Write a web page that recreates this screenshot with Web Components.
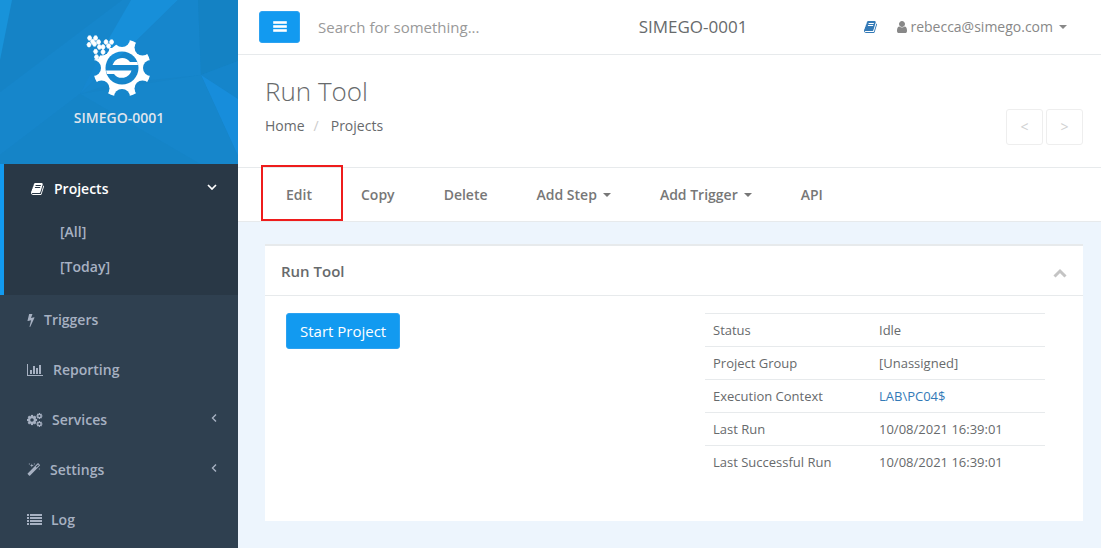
<!DOCTYPE html>
<html lang="en">
<head>
<meta charset="utf-8">
<title>Run Tool</title>
<style>
  html, body { margin: 0; min-height: 100%; }
  body { font: 14px/20px "Open Sans", sans-serif; color: #676a6c; background: #edf5fd; }
</style>
</head>
<body>
<app-shell>
  <side-bar slot="side" account="SIMEGO-0001">
    <nav-item icon="book" label="Projects" arrow="down" active>
      <sub-item>[All]</sub-item>
      <sub-item>[Today]</sub-item>
    </nav-item>
    <nav-item icon="bolt" label="Triggers"></nav-item>
    <nav-item icon="chart" label="Reporting"></nav-item>
    <nav-item icon="cogs" label="Services" arrow="left"></nav-item>
    <nav-item icon="magic" label="Settings" arrow="left"></nav-item>
    <nav-item icon="list" label="Log"></nav-item>
  </side-bar>
  <top-bar account="SIMEGO-0001" user="rebecca@simego.com"></top-bar>
  <page-heading heading="Run Tool"></page-heading>
  <tool-bar>
    <tool-action marked>Edit</tool-action>
    <tool-action>Copy</tool-action>
    <tool-action>Delete</tool-action>
    <tool-action menu>Add Step</tool-action>
    <tool-action menu>Add Trigger</tool-action>
    <tool-action>API</tool-action>
  </tool-bar>
  <tool-panel heading="Run Tool">
    <start-button>Start Project</start-button>
    <status-table></status-table>
  </tool-panel>
</app-shell>

<script>
const define = (name, render) => customElements.define(name, class extends HTMLElement {
  constructor() { super(); this.attachShadow({ mode: 'open' }); }
  connectedCallback() {
    this.shadowRoot.innerHTML = '<style>:host,*{box-sizing:border-box}a{color:inherit;text-decoration:none}button,input{font:inherit;color:inherit;margin:0}</style>' + render(this);
  }
});

const cog = (x, y, r, teeth, w) => {
  const step = 360 / teeth;
  let out = `<circle cx="${x}" cy="${y}" r="${r}" fill="none" stroke="currentColor" stroke-width="${w}"/>`;
  for (let i = 0; i < teeth; i++)
    out += `<rect x="${x - w / 2}" y="${y - r - w}" width="${w}" height="${w}" transform="rotate(${i * step} ${x} ${y})"/>`;
  return out;
};

const icons = {
  book: [14, 14, '0 0 1792 1792', '<path d="M1639 478q40 57 18 129l-275 906q-19 64-76.500 107.500t-122.500 43.500h-923q-77 0-148.500-53.500t-99.500-131.500q-24-67-2-127 0-4 3-27t4-37q1-8-3-21.500t-3-19.500q2-11 8-21t16.500-23.500 16.500-23.500q23-38 45-91.500t30-91.500q3-10 .5-30t-.5-28q3-11 17-28t17-23q21-36 42-92t25-90q1-9-2.500-32t.5-28q4-13 22-30.500t22-22.500q19-26 42.500-84.500t27.500-96.500q1-8-3-25.500t-2-26.500q2-8 9-18t18-23 17-21q8-12 16.500-30.500t15-35 16-36 19.500-32 26.500-23.500 36-11.500 47.500 5.500l-1 3q38-9 51-9h761q74 0 114 56t18 130l-274 906q-36 119-71.500 153.500t-128.500 34.500h-869q-27 0-38 15-11 16-1 43 24 70 144 70h923q29 0 56-15.500t35-41.500l300-987q7-22 5-57 38 15 59 43zm-1064 2q-4 13 2 22.500t20 9.500h608q13 0 25.500-9.500t16.500-22.500l21-64q4-13-2-22.500t-20-9.500h-608q-13 0-25.500 9.500t-16.500 22.500zm-83 256q-4 13 2 22.500t20 9.500h608q13 0 25.500-9.500t16.500-22.500l21-64q4-13-2-22.500t-20-9.500h-608q-13 0-25.500 9.500t-16.500 22.500z"/>'],
  bolt: [8, 14, '410 0 970 1792', '<path d="M1333 566q18 20 7 44l-540 1157q-13 25-42 25-4 0-14-2-17-5-25.500-19t-4.500-30l197-808-406 101q-4 1-12 1-18 0-31-11-18-15-13-39l201-825q4-16 16.500-26t28.500-10h328q19 0 32 12.500t13 29.500q0 8-5 18l-171 463 396-98q8-2 12-2 19 0 33 15z"/>'],
  user: [12, 14, '192 0 1408 1792', '<path d="M1536 1399q0 109-62.500 187t-150.500 78h-854q-88 0-150.500-78t-62.500-187q0-85 8.500-160.500t31.500-152 58.500-131 94-89 134.500-34.500q131 128 313 128t313-128q76 0 134.500 34.500t94 89 58.500 131 31.500 152 8.500 160.500zm-256-887q0 159-112.500 271.500t-271.500 112.500-271.500-112.500-112.500-271.500 112.500-271.500 271.500-112.500 271.500 112.500 112.500 271.500z"/>'],
  magic: [14, 14, '90 0 1664 1792', '<path d="M1254 581l293-293-107-107-293 293zm447-293q0 27-18 45l-1286 1286q-18 18-45 18t-45-18l-198-198q-18-18-18-45t18-45l1286-1286q18-18 45-18t45 18l198 198q18 18 18 45zm-1351-190l98 30-98 30-30 98-30-98-98-30 98-30 30-98zm350 162l196 60-196 60-60 196-60-196-196-60 196-60 60-196zm930 478l98 30-98 30-30 98-30-98-98-30 98-30 30-98zm-640-640l98 30-98 30-30 98-30-98-98-30 98-30 30-98z"/>'],
  chart: [17, 14, '0 0 17 14', '<path d="M0 1h1v11h15v1H0zM3 7h2v4H3zM6 3h2v8H6zM9 5h2v6H9zM12 2h2v9h-2z"/>'],
  cogs: [16, 14, '0 0 16 14', cog(5, 7, 2.9, 8, 2.2) + cog(12.4, 3, 1.7, 8, 1.3) + cog(12.4, 11, 1.7, 8, 1.3)],
  list: [15, 14, '0 0 15 14', '<path d="M0 1h2v2H0zM3 1h12v2H3zM0 4h2v2H0zM3 4h12v2H3zM0 7h2v2H0zM3 7h12v2H3zM0 10h2v2H0zM3 10h12v2H3z"/>'],
  bars: [14, 14, '0 0 14 14', '<path d="M0 1h14v3H0zM0 5h14v3H0zM0 9h14v3H0z" stroke="#129af0" stroke-width=".4"/>'],
  down: [10, 6, '0 0 10 6', '<path d="M1 1l4 4 4-4" fill="none" stroke="currentColor" stroke-width="1.700"/>'],
  left: [6, 10, '0 0 6 10', '<path d="M5 1.500L1.500 5 5 8.500" fill="none" stroke="currentColor" stroke-width="1.400"/>'],
  up: [14, 10, '0 0 14 10', '<path d="M1.500 8.500L7 3l5.500 5.500" fill="none" stroke="currentColor" stroke-width="3"/>'],
  caret: [8, 4, '0 0 8 4', '<path d="M0 0h8L4 4z"/>']
};

define('ui-icon', el => {
  const [w, h, box, body] = icons[el.getAttribute('name')];
  return `<style>:host{display:inline-flex;flex:none}svg{display:block;fill:currentColor}</style>
    <svg width="${w}" height="${h}" viewBox="${box}" aria-hidden="true">${body}</svg>`;
});

define('app-shell', () => `<style>
    :host{display:grid;grid-template-columns:238px minmax(0,1fr);min-height:100vh}
    aside{background:#2f4050}
  </style>
  <aside><slot name="side"></slot></aside><main><slot></slot></main>`);

define('brand-logo', () => {
  let cuts = '';
  for (let i = 0; i < 8; i++) {
    const a = i * Math.PI / 4;
    cuts += `<circle cx="${(29 * Math.cos(a)).toFixed(2)}" cy="${(29 * Math.sin(a)).toFixed(2)}" r="8" fill="#000"/>`;
  }
  const dots = [[-32.4, -30], [-26.4, -30], [-29.4, -26.5], [-33, -23.3], [-27.5, -24], [-23.4, -26], [-22.6, -21], [-26.4, -16.5], [-19, -21], [-19, -16], [-16, -26], [-10.4, -26], [-13.4, -22], [-25.5, -11]]
    .map(([x, y]) => `<path d="M${x - 2.2} ${y}l1.200-2.200h2l1.200 2.200-1.200 2.200h-2z" stroke="#fff" stroke-width=".6"/>`).join('');
  return `<style>:host{display:block}svg{display:block;margin:auto}</style>
  <svg width="66" height="62" viewBox="-36 -33 66 62" role="img" aria-label="Simego">
    <mask id="gear" maskUnits="userSpaceOnUse" x="-36" y="-33" width="66" height="62">
      <circle r="29" fill="#fff"/>${cuts}
      <path d="M-36-33H-5V-24L-10-20H-15V-14H-21L-24-9-36-8z" fill="#000"/>
      <circle r="16.500" fill="#000"/>
    </mask>
    <rect x="-36" y="-33" width="66" height="62" fill="#fff" mask="url(#gear)"/>
    <g fill="#fff">${dots}
      <path d="M-9.500-3A10 10 0 0 1 8-6H15.500L16-3zM-16 2.500H9.500A10 10 0 0 1-8 6H-15z"/>
    </g>
  </svg>`;
});

define('side-bar', el => `<style>
    :host{display:block;color:#a7b1c2;font-weight:600}
    header{position:relative;height:164px;padding-top:35px;background:#1684c8;color:#dfe4ed;text-align:center}
    .facets{position:absolute;inset:0;width:100%;height:100%}
    brand-logo,header a{position:relative}
    header a{display:block;padding-top:11px}
  </style>
  <header>
    <svg class="facets" viewBox="0 0 238 164" preserveAspectRatio="none" aria-hidden="true">
      <path fill="#1686cb" d="M0 92L122 0H131L80 94 0 155z"/>
      <path fill="#1583c6" d="M0 60L12 0H122L0 92z"/>
      <path fill="#1893da" d="M0 0H12L0 60z"/>
      <path fill="#178fd9" d="M131 0H178L134 43 112 64 108 40z"/>
      <path fill="#1687cf" d="M108 40L112 64 80 94z"/>
      <path fill="#1686cc" d="M80 94L134 43 178 0H198L201 75 110 84z"/>
      <path fill="#1482c4" d="M198 0H238V61L201 75z"/>
      <path fill="#1585cb" d="M201 75L238 61V99z"/>
      <path fill="#178ddb" d="M201 75L238 99V156z"/>
      <path fill="#1686cb" d="M80 94L201 75 238 156V164H200z"/>
      <path fill="#1584c7" d="M0 155L80 94 200 164H0z"/>
    </svg>
    <brand-logo></brand-logo>
    <a href="#">${el.getAttribute('account')}</a>
  </header>
  <nav><slot></slot></nav>`);

define('nav-item', el => {
  const arrow = el.getAttribute('arrow');
  return `<style>
    :host{display:block}
    :host([active]){border-left:4px solid #129af0;background:#293846;padding-bottom:11px}
    a{display:flex;align-items:center;height:50px;padding:0 21px 0 27px}
    :host([active]) a{color:#fff}
    .label{flex:1;padding-left:9px}
    .arrow{padding-bottom:4px}
  </style>
  <a href="#"><ui-icon name="${el.getAttribute('icon')}"></ui-icon><span class="label">${el.getAttribute('label')}</span>
  ${arrow ? `<ui-icon class="arrow" name="${arrow}"></ui-icon>` : ''}</a><slot></slot>`;
});

define('sub-item', () => `<style>
    :host{display:block}
    a{display:block;padding:8px 10px 7px 56px}
  </style><a href="#"><slot></slot></a>`);

define('top-bar', el => `<style>
    :host{display:flex;align-items:center;height:55px;padding:0 34px 0 21px;background:#fff;border-bottom:1px solid #e7eaec}
    .toggle{width:41px;height:32px;padding:0;border:1px solid #2ca2f1;border-radius:3px;background:#129af0;color:#fff;display:grid;place-items:center}
    input{flex:1;min-width:0;padding:0 18px;border:0;outline:0;background:none;font-size:15px;line-height:20px}
    input::placeholder{color:#999;opacity:1}
    .account{font-size:17px}
    .docs{margin-left:117px;color:#337ab7;display:flex}
    .user{display:flex;align-items:center;margin-left:18px;padding:0;border:0;background:none;color:#888}
    .user span{padding:0 6px 0 2px}
  </style>
  <button class="toggle" aria-label="Toggle menu"><ui-icon name="bars"></ui-icon></button>
  <input type="text" placeholder="Search for something..." aria-label="Search">
  <span class="account">${el.getAttribute('account')}</span>
  <a class="docs" href="#" aria-label="Documentation"><ui-icon name="book"></ui-icon></a>
  <button class="user"><ui-icon name="user"></ui-icon><span>${el.getAttribute('user')}</span><ui-icon name="caret"></ui-icon></button>`);

define('page-heading', el => `<style>
    :host{display:flex;justify-content:space-between;align-items:flex-end;height:113px;padding:0 18px 22px 27px;background:#fff;border-bottom:1px solid #e7eaec}
    h1{margin:0 0 10px;font-size:26px;line-height:30px;font-weight:300}
    ol{display:flex;margin:0;padding:0 0 9px;list-style:none}
    li+li::before{content:"/";padding:0 12px 0 9px;color:#ccc}
    .pager{display:flex;gap:3px}
    .pager button{width:37px;height:36px;padding:0;border:1px solid #eee;border-radius:3px;background:#fff;color:#d0d1d2}
  </style>
  <div><h1>${el.getAttribute('heading')}</h1>
    <ol><li><a href="#">Home</a></li><li><a href="#">Projects</a></li></ol></div>
  <div class="pager"><button aria-label="Previous">&lt;</button><button aria-label="Next">&gt;</button></div>`);

define('tool-bar', () => `<style>
    :host{display:flex;gap:49px;height:54px;padding:0 48px;background:#fff;border-bottom:1px solid #e7eaec}
  </style><slot></slot>`);

define('tool-action', el => `<style>
    :host{display:flex;position:relative;color:#777;font-weight:600;white-space:nowrap}
    button{display:flex;align-items:center;gap:6px;padding:0;border:0;background:none}
    :host([marked])::after{content:"";position:absolute;inset:-3px -31px 0 -25px;border:2px solid #ee1c1c;pointer-events:none}
  </style>
  <button><slot></slot>${el.hasAttribute('menu') ? '<ui-icon name="caret"></ui-icon>' : ''}</button>`);

define('tool-panel', el => `<style>
    :host{display:block;margin:22px 18px 27px 27px;background:#fff;border-top:2px solid #e7eaec}
    header{display:flex;justify-content:space-between;align-items:center;height:50px;padding:0 16px;border-bottom:1px solid #e7eaec}
    h2{margin:0;font-size:15px;line-height:20px;font-weight:600}
    header button{display:flex;padding:4px 0 0;border:0;background:none;color:#c4c4c4}
    .body{display:flex;justify-content:space-between;align-items:flex-start;min-height:225px;padding:17px 38px 17px 21px}
  </style>
  <header><h2>${el.getAttribute('heading')}</h2><button aria-label="Collapse"><ui-icon name="up"></ui-icon></button></header>
  <div class="body"><slot></slot></div>`);

define('start-button', () => `<style>
    :host{display:block}
    button{height:36px;padding:0 13px;border:1px solid #2ca2f1;border-radius:3px;background:#129af0;color:#fff;font-size:15px;line-height:20px}
  </style><button><slot></slot></button>`);

define('status-table', () => {
  const rows = [['Status', 'Idle'], ['Project Group', '[Unassigned]'], ['Execution Context', '<a href="#">LAB\\PC04$</a>'], ['Last Run', '10/08/2021 16:39:01'], ['Last Successful Run', '10/08/2021 16:39:01']];
  return `<style>
    :host{display:block;flex:0 1 340px}
    table{width:100%;border-collapse:collapse;font-size:13px;line-height:18px}
    th,td{height:33px;padding:0 8px;border-top:1px solid #e7eaec;text-align:left;font-weight:400}
    th{width:166px}
    a{color:#337ab7}
  </style>
  <table><tbody>${rows.map(([k, v]) => `<tr><th scope="row">${k}</th><td>${v}</td></tr>`).join('')}</tbody></table>`;
});
</script>
</body>
</html>
